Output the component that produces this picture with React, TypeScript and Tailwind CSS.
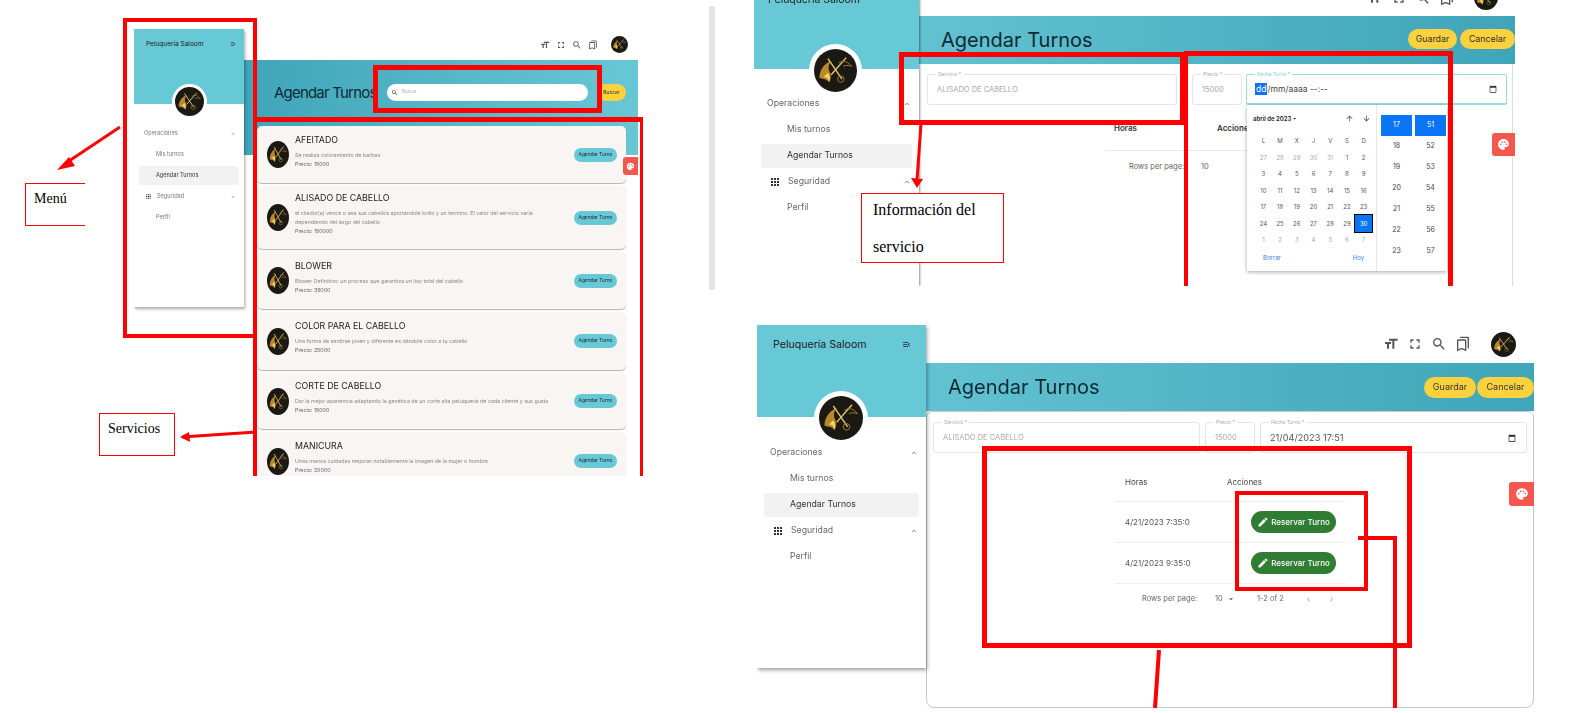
import React from 'react';
import {
  MdFormatSize, MdFullscreen, MdOutlineSearch, MdOutlineBookmarks, MdMenuOpen, MdApps,
  MdExpandLess, MdEdit, MdPalette, MdCalendarToday, MdArrowDropDown, MdChevronLeft, MdChevronRight,
  MdArrowUpward, MdArrowDownward,
} from 'react-icons/md';

const services = [
  { name: 'AFEITADO', text: 'Se realiza coloramiento de barbas', price: 'Precio: 15000', h: 'h-[57px]' },
  { name: 'ALISADO DE CABELLO', text: 'el cliador(a) vence o sea sus cabellos aportándole brillo y un termino. El valor del servicio varía dependiendo del largo del cabello', price: 'Precio: 150000', h: 'h-[63px]' },
  { name: 'BLOWER', text: 'Blower Definitivo: un proceso que garantiza un liso total del cabello', price: 'Precio: 35000', h: 'h-[57px]' },
  { name: 'COLOR PARA EL CABELLO', text: 'Una forma de sentirse joven y diferente es dándole color a tu cabello', price: 'Precio: 25000', h: 'h-[58px]' },
  { name: 'CORTE DE CABELLO', text: 'Dar la mejor apariencia adaptando la genética de un corte alta peluquería de cada cliente y sus gusto', price: 'Precio: 15000', h: 'h-[56px]' },
  { name: 'MANICURA', text: 'Unas manos cuidadas mejoran notablemente la imagen de la mujer o hombre', price: 'Precio: 20000', h: 'h-[58px]' },
];

const days = [27, 28, 29, 30, 31, 1, 2, 3, 4, 5, 6, 7, 8, 9, 10, 11, 12, 13, 14, 15, 16, 17, 18, 19, 20, 21, 22, 23, 24, 25, 26, 27, 28, 29, 30, 1, 2, 3, 4, 5, 6, 7];

// gold scissors logo on a dark disc
const Logo = ({ className }: { className: string }) => (
  <svg viewBox="0 0 40 40" preserveAspectRatio="none" className={className}>
    <circle cx="20" cy="20" r="20" fill="#1b1914" />
    <path d="M5 27c0-7 4-13 11-16-3 4-3 8-1 11 1 3 1 6-1 9-2-3-5-3-9-4z" fill="#b8882a" />
    <path d="M9 26c3 0 5 2 5 5 1-3 1-6-1-9z" fill="#f2d675" />
    <path d="M13 9l13 19M30 8L16 24" stroke="#e3c56a" strokeWidth="1.3" fill="none" />
    <path d="M23 13c4-3 9-1 12 3-3-1-6-1-8 0M22 28a3 3 0 1 0 6 0 3 3 0 1 0-6 0" stroke="#9c7a2b" strokeWidth="0.9" fill="none" />
  </svg>
);

const Rect = ({ className }: { className: string }) => <div className={`absolute border-[#ff0000] ${className}`} />;

const TopIcons = ({ gaps, icon, avatar }: { gaps: string; icon: string; avatar: string }) => (
  <div className={`flex items-center text-[#555] ${gaps}`}>
    <MdFormatSize className={icon} />
    <MdFullscreen className={icon} />
    <MdOutlineSearch className={icon} />
    <MdOutlineBookmarks className={icon} />
    <Logo className={avatar} />
  </div>
);

const Field = ({ label, value, className }: { label: string; value: string; className: string }) => (
  <div className={`relative flex items-center h-[31px] rounded-[3px] border border-[#e4e4e4] ${className}`}>
    <span className="absolute -top-[4px] left-[8px] bg-white px-[2px] text-[5px] leading-[7px] text-[#aaa]">{label}</span>
    <span className="pl-[9px] text-[7.5px] text-[#a8a8a8] whitespace-nowrap overflow-hidden">{value}</span>
  </div>
);

const Palette = ({ className, size }: { className: string; size: string }) => (
  <div className={`absolute flex items-center justify-center bg-[#f5574f] rounded-l-[3px] text-white ${className}`}>
    <MdPalette className={size} />
  </div>
);

const Nav = () => (
  <div className="flex flex-col text-[#666] text-[8.7px]">
    <div className="flex items-center justify-between h-[26px] pl-[13px] pr-[8px]">
      <span>Operaciones</span>
      <MdExpandLess className="w-[8px] h-[8px]" />
    </div>
    <div className="flex items-center h-[26px] pl-[33px]">Mis turnos</div>
    <div className="flex items-center h-[24px] mx-[7px] pl-[26px] my-[1px] rounded-[3px] bg-[#f2f2f2] text-[#333]">Agendar Turnos</div>
    <div className="flex items-center justify-between h-[26px] pl-[15px] pr-[8px]">
      <span className="flex items-center gap-[7px]"><MdApps className="w-[12px] h-[12px] text-[#333]" />Seguridad</span>
      <MdExpandLess className="w-[8px] h-[8px]" />
    </div>
    <div className="flex items-center h-[26px] pl-[33px]">Perfil</div>
  </div>
);

const Screen1 = () => (
  <div className="absolute left-[134px] top-[29px] w-[504px] h-[447px] overflow-hidden flex blur-[0.4px]">
    <aside className="w-[110px] h-[278px] shrink-0 bg-white shadow-[1px_2px_3px_rgba(0,0,0,0.35)] z-10">
      <div className="relative h-[75px] bg-[#68c9d6] flex justify-between pl-[12px] pr-[8px] pt-[11px] text-[6.5px] text-[#222]">
        <span>Peluquería Saloom</span>
        <MdMenuOpen className="w-[6px] h-[6px] mt-[1px]" />
        <div className="absolute left-[38px] top-[55px] rounded-full bg-white p-[3px]"><Logo className="w-[29px] h-[29px] block" /></div>
      </div>
      <div className="flex flex-col mt-[19px] text-[5.6px] text-[#777]">
        <div className="flex justify-between items-center h-[21px] pl-[10px] pr-[8px]"><span>Operaciones</span><MdExpandLess className="w-[6px] h-[6px]" /></div>
        <div className="flex items-center h-[21px] pl-[22px]">Mis turnos</div>
        <div className="flex items-center h-[19px] my-[1px] mx-[5px] pl-[17px] rounded-[2px] bg-[#f2f2f2] text-[#333]">Agendar Turnos</div>
        <div className="flex items-center h-[21px] pl-[11px] pr-[8px] justify-between">
          <span className="flex items-center gap-[5px]"><MdApps className="w-[7px] h-[7px] text-[#333]" />Seguridad</span>
          <MdExpandLess className="w-[6px] h-[6px]" />
        </div>
        <div className="flex items-center h-[21px] pl-[22px]">Perfil</div>
      </div>
    </aside>
    <main className="flex-1 flex flex-col min-w-0">
      <div className="h-[31px] shrink-0 flex items-center justify-end pr-[10px]">
        <TopIcons gaps="gap-[6px]" icon="w-[10px] h-[10px]" avatar="w-[17px] h-[17px] ml-[7px]" />
      </div>
      <div className="h-[95px] shrink-0 bg-gradient-to-r from-[#3fa5b9] to-[#68c7d5] flex items-start pl-[30px] pt-[24px]">
        <h1 className="w-[99px] text-[15px] leading-[18px] tracking-[-0.8px] text-[#0f2a33] whitespace-nowrap">Agendar Turnos</h1>
        <div className="w-[201px] h-[17px] ml-[14px] rounded-full bg-white flex items-center gap-[4px] pl-[4px] text-[4.5px] text-[#aaa]">
          <MdOutlineSearch className="w-[7px] h-[7px] text-[#333]" />Buscar
        </div>
        <div className="w-[29px] h-[17px] ml-[9px] rounded-full bg-[#fbd13d] flex items-center justify-center text-[5px] text-[#333]">Buscar</div>
      </div>
      <div className="-mt-[29px] pl-[13px] pr-[12px] flex flex-col gap-[3px]">
        {services.map((s) => (
          <div key={s.name} className={`${s.h} shrink-0 rounded-[5px] bg-[#f8f5f2] shadow-[0_1px_1px_rgba(0,0,0,0.3)] flex items-center pl-[10px] pr-[9px] gap-[6px]`}>
            <Logo className="w-[22px] h-[27px] shrink-0" />
            <div className="flex-1 min-w-0 -mt-[8px]">
              <div className="text-[8.8px] leading-[14px] text-[#222]">{s.name}</div>
              <div className="mt-[4px] text-[5.3px] leading-[9px] text-[#888] max-w-[262px]">{s.text}</div>
              <div className="text-[5.3px] leading-[9px] text-[#666]">{s.price}</div>
            </div>
            <div className="w-[43px] h-[14px] shrink-0 rounded-full bg-[#68c9d6] flex items-center justify-center text-[4.8px] text-[#223] whitespace-nowrap">Agendar Turno</div>
          </div>
        ))}
      </div>
    </main>
    <Palette className="left-[489px] top-[128px] w-[15px] h-[18px]" size="w-[9px] h-[9px]" />
  </div>
);

const Screen2 = () => (
  <div className="absolute left-[754px] top-0 w-[761px] h-[286px] overflow-hidden flex blur-[0.4px]">
    <aside className="w-[165px] shrink-0 bg-white shadow-[1px_0_2px_rgba(0,0,0,0.45)] z-10">
      <div className="relative h-[69px] bg-[#68c9d6] pl-[14px] text-[10.4px] leading-[6px] text-[#222]">
        <span className="block -translate-y-[3px]">Peluquería Saloom</span>
        <div className="absolute left-[55px] top-[44px] rounded-full bg-white p-[5px]"><Logo className="w-[43px] h-[43px] block" /></div>
      </div>
      <div className="mt-[22px]"><Nav /></div>
    </aside>
    <main className="flex-1 flex flex-col min-w-0 relative">
      <div className="h-[16px] shrink-0 flex justify-end pr-[17px]">
        <div className="-mt-[14px] h-[24px]">
          <TopIcons gaps="gap-[8px]" icon="w-[16px] h-[16px]" avatar="w-[24px] h-[24px] ml-[11px]" />
        </div>
      </div>
      <div className="h-[48px] shrink-0 bg-gradient-to-r from-[#62c2d1] to-[#3fa5b9] flex items-center justify-between pl-[22px]">
        <h1 className="text-[20px] text-[#0f2a33] -mt-[1px]">Agendar Turnos</h1>
        <div className="flex gap-[3px] -mt-[3px]">
          <div className="w-[49px] h-[20px] rounded-full bg-[#fbd13d] flex items-center justify-center text-[8.8px] text-[#333]">Guardar</div>
          <div className="w-[55px] h-[20px] rounded-full bg-[#fbd13d] flex items-center justify-center text-[8.8px] text-[#333]">Cancelar</div>
        </div>
      </div>
      <div className="flex-1 mr-[2px] border-r border-[#ddd] bg-white pt-[10px] pl-[8px] pr-[5px]">
        <div className="flex">
          <Field label="Servicio *" value="ALISADO DE CABELLO" className="w-[250px]" />
          <Field label="Precio *" value="15000" className="w-[50px] ml-[15px]" />
          <div className="relative flex items-center h-[31px] w-[261px] ml-[4px] rounded-[2px] border border-[#9adbe4] border-b-2">
            <span className="absolute -top-[4px] left-[8px] bg-white px-[2px] text-[5px] leading-[7px] text-[#7ccfdb]">Fecha Turno *</span>
            <span className="ml-[8px] bg-[#0a75f5] text-white text-[8.5px] px-[1px]">dd</span>
            <span className="text-[8.5px] text-[#444]">/mm/aaaa --:--</span>
            <MdCalendarToday className="w-[8px] h-[8px] ml-auto mr-[9px] text-[#333]" />
          </div>
        </div>
        <div className="ml-[178px] w-[240px]">
          <div className="flex items-center h-[46px] border-b border-[#e8e8e8] pl-[9px] text-[8px] font-semibold text-[#333]">
            <span className="w-[103px]">Horas</span><span>Acciones</span>
          </div>
          <div className="flex items-center h-[31px] pl-[24px] text-[7.5px] text-[#666]">
            <span className="w-[72px]">Rows per page:</span><span>10</span>
          </div>
        </div>
      </div>
      <Palette className="left-[573px] top-[133px] w-[23px] h-[23px]" size="w-[13px] h-[13px]" />
      <div className="absolute left-[328px] top-[105px] w-[200px] h-[166px] bg-white shadow-[0_1px_4px_rgba(0,0,0,0.35)] flex">
        <div className="w-[130px] border-r border-[#e6e6e6] pl-[8px] pr-[4px] flex flex-col">
          <div className="flex items-center justify-between h-[26px] text-[6px] font-semibold text-[#222] pr-[1px]">
            <span className="flex items-center -ml-[2px]">abril de 2023<MdArrowDropDown className="w-[7px] h-[7px]" /></span>
            <span className="flex gap-[8px] text-[#555]"><MdArrowUpward className="w-[9px] h-[9px]" /><MdArrowDownward className="w-[9px] h-[9px]" /></span>
          </div>
          <div className="grid grid-cols-7 text-[6px] text-[#555]">
            {['L', 'M', 'X', 'J', 'V', 'S', 'D'].map((d) => (
              <span key={d} className="h-[18px] flex items-center justify-center">{d}</span>
            ))}
            {days.map((d, i) => (
              <span key={i} className={`h-[16.5px] flex items-center justify-center ${i === 34 ? 'bg-[#0a75f5] text-white outline outline-1 outline-black' : i < 5 || i > 34 ? 'text-[#aaa]' : 'text-[#555]'}`}>{d}</span>
            ))}
          </div>
          <div className="flex justify-between px-[8px] mt-[5px] text-[6px] text-[#3b82d8]"><span>Borrar</span><span>Hoy</span></div>
        </div>
        <div className="flex-1 grid grid-cols-2 gap-x-[3px] pt-[10px] pl-[4px] pr-[1px] content-start text-[7px] text-[#444]">
          {[[17, 51], [18, 52], [19, 53], [20, 54], [21, 55], [22, 56], [23, 57]].map(([h, m], i) => (
            <React.Fragment key={h}>
              <span className={`h-[21px] flex items-center justify-center ${i === 0 ? 'bg-[#0a75f5] text-white' : ''}`}>{h}</span>
              <span className={`h-[21px] flex items-center justify-center ${i === 0 ? 'bg-[#0a75f5] text-white' : ''}`}>{m}</span>
            </React.Fragment>
          ))}
        </div>
      </div>
    </main>
  </div>
);

const Screen3 = () => (
  <div className="absolute left-[757px] top-[325px] w-[777px] h-[383px] overflow-hidden flex blur-[0.4px]">
    <aside className="w-[169px] h-[343px] shrink-0 bg-white shadow-[1px_2px_4px_rgba(0,0,0,0.4)] z-10">
      <div className="relative h-[92px] bg-[#68c9d6] flex justify-between pl-[16px] pr-[15px] pt-[12px] text-[10.6px] text-[#222]">
        <span>Peluquería Saloom</span>
        <MdMenuOpen className="w-[9px] h-[9px] mt-[3px]" />
        <div className="absolute left-[57px] top-[66px] rounded-full bg-white p-[5px]"><Logo className="w-[44px] h-[44px] block" /></div>
      </div>
      <div className="mt-[23px]"><Nav /></div>
    </aside>
    <main className="flex-1 flex flex-col min-w-0 relative">
      <div className="h-[38px] shrink-0 flex items-center justify-end pr-[18px]">
        <TopIcons gaps="gap-[8px]" icon="w-[16px] h-[16px]" avatar="w-[25px] h-[25px] ml-[12px]" />
      </div>
      <div className="h-[48px] shrink-0 bg-gradient-to-r from-[#62c2d1] to-[#3fa5b9] flex items-center justify-between pl-[22px]">
        <h1 className="text-[20px] text-[#0f2a33]">Agendar Turnos</h1>
        <div className="flex gap-[1px]">
          <div className="w-[52px] h-[21px] rounded-full bg-[#fbd13d] flex items-center justify-center text-[9px] text-[#333]">Guardar</div>
          <div className="w-[57px] h-[21px] rounded-full bg-[#fbd13d] flex items-center justify-center text-[9px] text-[#333]">Cancelar</div>
        </div>
      </div>
      <div className="flex-1 rounded-b-[8px] rounded-t-[6px] border border-[#c8c8c8] pt-[10px] pl-[6px] pr-[6px]">
        <div className="flex gap-[5px]">
          <Field label="Servicio *" value="ALISADO DE CABELLO" className="w-[267px]" />
          <Field label="Precio *" value="15000" className="w-[50px]" />
          <div className="relative flex items-center h-[31px] flex-1 rounded-[3px] border border-[#e4e4e4]">
            <span className="absolute -top-[4px] left-[8px] bg-white px-[2px] text-[5px] leading-[7px] text-[#aaa]">Fecha Turno *</span>
            <span className="pl-[9px] text-[9.2px] text-[#555]">21/04/2023 17:51</span>
            <MdCalendarToday className="w-[8px] h-[8px] ml-auto mr-[10px] text-[#222]" />
          </div>
        </div>
        <div className="ml-[182px] w-[231px] mt-[10px] text-[8px]">
          <div className="flex items-center h-[39px] border-b border-[#eee] pl-[10px] text-[#444]">
            <span className="w-[102px]">Horas</span><span>Acciones</span>
          </div>
          {['4/21/2023 7:35:0', '4/21/2023 9:35:0'].map((d) => (
            <div key={d} className="flex items-center h-[41px] border-b border-[#eee] pl-[10px] text-[#555]">
              <span className="w-[126px]">{d}</span>
              <div className="w-[85px] h-[22px] rounded-full bg-[#2e7d32] flex items-center justify-center gap-[2px] text-[8px] font-medium text-white">
                <MdEdit className="w-[12px] h-[12px]" />Reservar Turno
              </div>
            </div>
          ))}
          <div className="flex items-center h-[30px] pl-[27px] text-[#666] text-[7.5px]">
            <span className="w-[73px]">Rows per page:</span>
            <span className="flex items-center w-[42px]">10<MdArrowDropDown className="w-[10px] h-[10px] ml-[3px]" /></span>
            <span className="w-[47px]">1-2 of 2</span>
            <MdChevronLeft className="w-[9px] h-[9px] text-[#aaa]" />
            <MdChevronRight className="w-[9px] h-[9px] text-[#aaa] ml-[14px]" />
          </div>
        </div>
      </div>
      <Palette className="left-[583px] top-[157px] w-[25px] h-[24px]" size="w-[14px] h-[14px]" />
    </main>
  </div>
);

const Label = ({ className, children }: { className: string; children: React.ReactNode }) => (
  <div className={`absolute border border-[#ff0000] bg-white font-['Liberation_Serif',serif] text-black ${className}`}>{children}</div>
);

export default function App() {
  return (
    <div className="relative w-[1570px] h-[713px] bg-white overflow-hidden font-['Inter',sans-serif]">
      <div className="absolute left-[709px] top-[6px] w-[6px] h-[284px] bg-[#e5e5e5]" />
      <Screen1 />
      <Screen2 />
      <Screen3 />

      {/* red notes laid over the screenshots */}
      <Rect className="left-[123px] top-[18px] w-[134px] h-[320px] border-4" />
      <Rect className="left-[373px] top-[65px] w-[229px] h-[48px] border-[5px]" />
      <Rect className="left-[253px] top-[117px] w-[390px] h-[359px] border-l-4 border-r-[3px] border-t-[5px]" />
      <Rect className="left-[899px] top-[52px] w-[286px] h-[73px] border-[5px]" />
      <Rect className="left-[1184px] top-[51px] w-[269px] h-[235px] border-l-4 border-r-[5px] border-t-[5px]" />
      <Rect className="left-[982px] top-[446px] w-[430px] h-[202px] border-[5px]" />
      <Rect className="left-[1235px] top-[491px] w-[133px] h-[100px] border-4" />

      <svg className="absolute left-0 top-0 pointer-events-none" width="1570" height="713" fill="none" stroke="#ff0000">
        <path d="M120 127L66 163" strokeWidth="3" />
        <path d="M57 170l12-13 6 9z" fill="#ff0000" strokeWidth="0" />
        <path d="M257 432l-75 5" strokeWidth="3" />
        <path d="M180 437l9-5 1 10z" fill="#ff0000" strokeWidth="0" />
        <path d="M921 124l-4 56" strokeWidth="3" />
        <path d="M917 188l-6-10 12 1z" fill="#ff0000" strokeWidth="0" />
        <path d="M1358 538h37v170" strokeWidth="4" />
        <path d="M1159 650l-4 58" strokeWidth="4" />
      </svg>

      <Label className="left-[25px] top-[183px] w-[60px] h-[43px] border-r-0 pl-[8px] pt-[4px] text-[14px]">Menú</Label>
      <Label className="left-[99px] top-[413px] w-[76px] h-[43px] pl-[8px] pt-[4px] text-[14px]">Servicios</Label>
      <Label className="left-[861px] top-[193px] w-[143px] h-[70px] pl-[11px] text-[16px] leading-[37px]"><div className="-mt-[3px]">Información del<br />servicio</div></Label>
    </div>
  );
}
